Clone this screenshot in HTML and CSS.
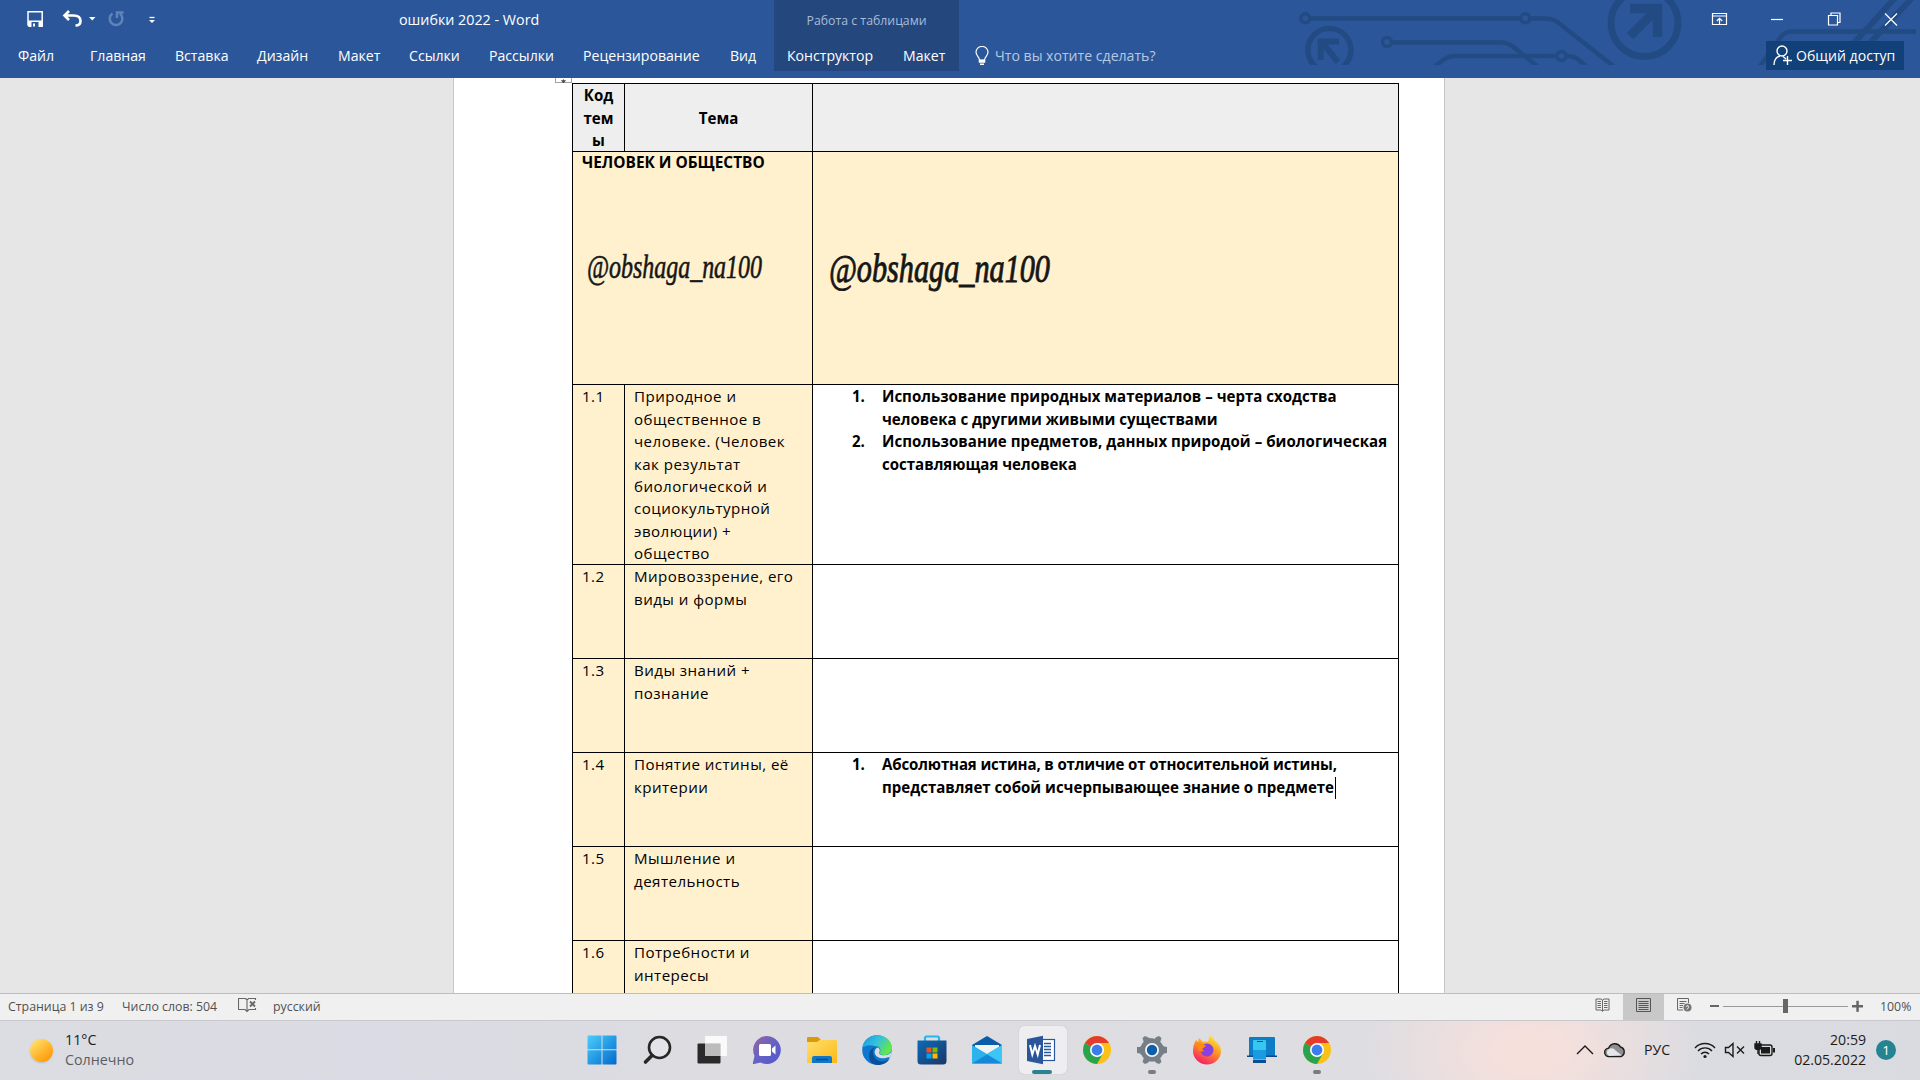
FILE: index.html
```html
<!DOCTYPE html>
<html lang="ru">
<head>
<meta charset="utf-8">
<title>ошибки 2022 - Word</title>
<link rel="stylesheet" href="styles.css">
</head>
<body>
<div class="screen">

<header class="ribbon">
  <svg class="ribbon-art" width="640" height="78" viewBox="0 0 640 78">
    <defs><clipPath id="art"><rect width="640" height="65"/></clipPath></defs>
    <g clip-path="url(#art)" fill="none" stroke="#234b83" stroke-width="4.5">
      <circle cx="25.3" cy="18.3" r="4.5" stroke-width="3.5"/>
      <path d="M30 18.500H240M250 18.500h15q9 0 15 5.500L337 69"/>
      <circle cx="245.3" cy="18.3" r="4.5" stroke-width="3.5"/>
      <circle cx="107" cy="42" r="4.5" stroke-width="3.5"/>
      <path d="M112 42.500H221q7 0 13 5L261 69"/>
      <path d="M151 69l13-9.500q5-3.500 11-3.500H277M286 56q8 0 13 4l9 8"/>
      <circle cx="281.5" cy="56" r="4.5" stroke-width="3.5"/>
      <circle cx="364.5" cy="23" r="33.5" stroke-width="7"/>
      <path d="M350 8.500h27.500V37M376 10L350 36" stroke-width="9.5"/>
      <circle cx="49.4" cy="50" r="21.5" stroke-width="5.5"/>
      <path d="M59 41.500H40.700V60M43 43.500L58 62" stroke-width="6"/>
      <path d="M636 31.500H512q-7 0-11 5L478 69"/>
      <path d="M615-2L574 43M632-2L590 43" stroke-width="6"/>
    </g>
  </svg>

  <div class="title-row">
    <div class="qat">
      <svg width="160" height="22" viewBox="0 0 160 22" fill="none" stroke="#fff">
        <path d="M8 3.700h14.200v14.500H9.500L8 16.800z" stroke-width="1.5"/>
        <path d="M8 12.500h14v6H8z" fill="#fff" stroke="none"/>
        <path d="M11.500 14h7v5h-7z" fill="#2b579a" stroke="none"/><path d="M13 15.500h2v3h-2z" fill="#fff" stroke="none"/>
        <path d="M49 3l-4.500 4.500L49 12M45.500 7.500h8c5.500 0 7 3 7 5.500 0 3.500-2.500 4.500-5 4.500" stroke-width="2.6"/>
        <path d="M69 9h6.500l-3.250 3.500z" fill="#fff" stroke="none"/>
        <g stroke="#6084ba" stroke-width="2.5"><path d="M92.500 5.500a6.300 6.300 0 1 0 7.500.3M97 10V4.500h6.500"/></g>
        <path d="M129.500 9.500h5" stroke-width="1.3"/><path d="M129 12h6l-3 3z" fill="#fff" stroke="none"/>
      </svg>
    </div>
    <div class="doc-title">ошибки 2022 - Word</div>
    <div class="context-title">Работа с таблицами</div>
    <div class="window-buttons">
      <svg width="190" height="20" viewBox="0 0 190 20" fill="none" stroke="#fff" stroke-width="1.2">
        <path d="M2.500 3.500h14v11h-14zM2.500 6h14M9.500 14V8.500M6.800 11l2.700-2.700L12.200 11"/>
        <path d="M61 9.500h12"/>
        <path d="M118.500 5.500h9v9.500h-9zM121 5V3h9v9.500h-2"/>
        <path d="M175 3.500L187 15.500M187 3.500L175 15.500"/>
      </svg>
    </div>
  </div>

  <nav class="tabs">
    <span>Файл</span><span>Главная</span><span>Вставка</span><span>Дизайн</span><span>Макет</span><span>Ссылки</span><span>Рассылки</span><span>Рецензирование</span><span>Вид</span><span class="ctx ctx-first">Конструктор</span><span class="ctx">Макет</span>
    <span class="tell-me">
      <svg width="14" height="20" viewBox="0 0 14 20" fill="none" stroke="#fff" stroke-width="1.2"><path d="M4.500 14c0-3-3.500-4-3.500-8a6 5.500 0 0 1 12 0c0 4-3.500 5-3.500 8z"/><path d="M4.500 14.500h5v1.500h-5zM5 18.300h4" stroke-width="1.5"/></svg>
      <span class="hint">Что вы хотите сделать?</span>
    </span>
    <span class="share">
      <svg width="20" height="21" viewBox="0 0 20 21" fill="none" stroke="#fff" stroke-width="1.4"><circle cx="9" cy="6" r="5"/><path d="M1 20c0-5 2-8 6-9M10 11.500l3 2.500M14.500 11v9M10 15.500h9"/></svg>
      <span>Общий доступ</span>
    </span>
  </nav>
</header>

<main class="workspace">
  <div class="page">
    <div class="table-handle"><svg width="9" height="5" viewBox="0 0 9 5"><path d="M4.500 0v2M2.500 1.500h4l-2 2.500z" stroke="#444" fill="#444" stroke-width=".6"/></svg></div>
    <div class="grid">
      <div class="cell head">Код<br>тем<br>ы</div>
      <div class="cell head">Тема</div>
      <div class="cell head"></div>

      <div class="cell section span2">
        <div class="section-name">ЧЕЛОВЕК И ОБЩЕСТВО</div>
        <svg class="sign sign-a" width="200" height="60"><text x="5" y="32" textLength="175" lengthAdjust="spacingAndGlyphs">@obshaga_na100</text></svg>
      </div>
      <div class="cell section">
        <svg class="sign sign-b" width="260" height="60"><text x="5" y="36" textLength="221" lengthAdjust="spacingAndGlyphs">@obshaga_na100</text></svg>
      </div>

      <div class="cell topic">1.1</div>
      <div class="cell topic">Природное и<br>общественное в<br>человеке. (Человек<br>как результат<br>биологической и<br>социокультурной<br>эволюции) +<br>общество</div>
      <div class="cell notes">
        <div class="item"><span>1.</span><span>Использование природных материалов – черта сходства<br>человека с другими живыми существами</span></div>
        <div class="item"><span>2.</span><span><span class="loose">Использование предметов, данных природой – биологическая</span><br>составляющая человека</span></div>
      </div>

      <div class="cell topic">1.2</div>
      <div class="cell topic">Мировоззрение, его<br>виды и формы</div>
      <div class="cell notes"></div>

      <div class="cell topic">1.3</div>
      <div class="cell topic">Виды знаний +<br>познание</div>
      <div class="cell notes"></div>

      <div class="cell topic">1.4</div>
      <div class="cell topic">Понятие истины, её<br>критерии</div>
      <div class="cell notes">
        <div class="item"><span>1.</span><span><span class="tight">Абсолютная истина, в отличие от относительной истины,</span><br>представляет собой исчерпывающее знание о предмете<i class="caret"></i></span></div>
      </div>

      <div class="cell topic">1.5</div>
      <div class="cell topic">Мышление и<br>деятельность</div>
      <div class="cell notes"></div>

      <div class="cell topic">1.6</div>
      <div class="cell topic">Потребности и<br>интересы</div>
      <div class="cell notes"></div>
    </div>
  </div>
</main>

<footer class="status">
  <span>Страница 1 из 9</span>
  <span class="st-words">Число слов: 504</span>
  <svg class="st-proof" width="19" height="16" viewBox="0 0 19 16" fill="none" stroke="#666" stroke-width="1.1"><path d="M9 3L7.500 1.500H.500v11H7L9 14.500l2-2h6.500V11M9 3v11M9 3l1.500-1.500h7V3"/><path d="M12 4.500l5 5M17 4.500l-5 5" stroke-width="1.8"/></svg>
  <span>русский</span>
  <span class="st-view"><svg width="15" height="14" viewBox="0 0 15 14" fill="none" stroke="#666"><path d="M7.500 2v11.500M7.500 2L6 1H1v11h5l1.500 1L9 12h5V1H9z"/><path d="M2.500 3.500h3.500M2.500 5.500h3.500M2.500 7.500h3.500M2.500 9.500h3.500M9 3.500h3.500M9 5.500h3.500M9 7.500h3.500M9 9.500h3.500"/></svg></span>
  <span class="st-view on"><svg width="15" height="14" viewBox="0 0 15 14" fill="none" stroke="#555"><path d="M.5.5h14v13H.5zM2.500 3.500h10M2.500 5.500h10M2.500 7.500h10M2.500 9.500h10M2.500 11.500h10"/></svg></span>
  <span class="st-view last"><svg width="15" height="14" viewBox="0 0 15 14" fill="none" stroke="#666"><path d="M6 12H.5V.5h11V5M2.500 3.500h7M2.500 5.500h5M2.500 7.500h3.500M2.500 9.500h3"/><circle cx="10.5" cy="9.5" r="4" fill="#777" stroke="none"/><path d="M9 8.500l2-1 .5 2-1.500 2" stroke="#f0f0f0"/></svg></span>
  <svg class="st-zoom" width="156" height="16" viewBox="0 0 156 16"><path d="M0 7h9v2H0z" fill="#666"/><path d="M13 8h125v1H13z" fill="#999"/><path d="M73 1h5v14h-5z" fill="#666"/><path d="M142 7h11v2.500h-11z" fill="#666"/><path d="M146.300 2.800h2.500v11h-2.500z" fill="#666"/></svg>
  <span class="st-pct">100%</span>
</footer>

<div class="taskbar">
  <div class="weather">
    <div class="sun"></div>
    <div class="weather-text"><div>11°C</div><div class="dim">Солнечно</div></div>
  </div>

  <div class="apps">
    <div class="app"><svg width="30" height="30" viewBox="0 0 30 30"><defs><linearGradient id="win" gradientUnits="userSpaceOnUse" x1="0" y1="0" x2="30" y2="30"><stop offset="0" stop-color="#4cd0fd"/><stop offset="1" stop-color="#0067cb"/></linearGradient></defs><path fill="url(#win)" d="M1.500.5H14.500V14.200H.5V1.500q0-1 1-1zM15.500.5h13q1 0 1 1V14.200h-14zM.5 15.300H14.500V29.500H1.500q-1 0-1-1zM15.500 15.300h14V28.500q0 1-1 1h-13z"/></svg></div>
    <div class="app"><svg width="30" height="30" viewBox="0 0 30 30" fill="none" stroke="#272727"><circle cx="17.5" cy="12.5" r="10.5" stroke-width="2.6" fill="#e4e4e8"/><path d="M10 20.500L3.500 27" stroke-width="3.6" stroke-linecap="round"/></svg></div>
    <div class="app"><svg width="30" height="30" viewBox="0 0 30 30"><rect x=".5" y="8.5" width="23" height="20" rx="1" fill="#2a2a2a"/><rect x="8" y="1" width="22" height="20" rx="1" fill="#fff" fill-opacity=".85"/><path d="M8 8.500h15.500V21H8z" fill="#bcbcbc"/></svg></div>
    <div class="app"><svg width="30" height="30" viewBox="0 0 30 30"><defs><linearGradient id="chat" x1="0" y1="0" x2="1" y2="1"><stop offset="0" stop-color="#9a64a0"/><stop offset=".5" stop-color="#6562c4"/><stop offset="1" stop-color="#5058d0"/></linearGradient></defs><path d="M15 1a14 14 0 1 1-6.500 26.500L2 29q-1.500 0-1-1.500L2.500 21A14 14 0 0 1 15 1z" fill="url(#chat)"/><rect x="7" y="9" width="12" height="12" rx="1.5" fill="#fff"/><path d="M20 13.500l3.500-3v9l-3.500-3z" fill="#fff"/></svg></div>
    <div class="app"><svg width="30" height="30" viewBox="0 0 30 30"><defs><linearGradient id="fold" x1="0" y1="0" x2="1" y2="1"><stop offset="0" stop-color="#ffdf70"/><stop offset="1" stop-color="#fcb912"/></linearGradient></defs><path d="M0 3q0-1 1-1h10l3 3h-1v4H0z" fill="#dc9a08"/><path d="M0 7h10l3-2h16q1 0 1 1v22H0z" fill="url(#fold)"/><path d="M5 28v-5q0-2 2-2h16q2 0 2 2v5z" fill="#1177c8"/><path d="M9 24.500h12" stroke="#0b4a87" stroke-width="1.5"/></svg></div>
    <div class="app"><svg width="30" height="30" viewBox="0 0 30 30"><defs><linearGradient id="edgetop" x1="0" y1="0" x2="1" y2=".5"><stop offset="0" stop-color="#1595dc"/><stop offset=".5" stop-color="#34bfe0"/><stop offset="1" stop-color="#62e84a"/></linearGradient></defs><circle cx="15" cy="15" r="14.800" fill="#0c79cf"/><path d="M.3 13C1.500 5 7.500.2 15 .2c9 0 15 6 15 12.500 0 5-4 7.300-8 7.300-3 0-5-1-4-3 1.500-3-1-6-5-6C7 9 2 11 .3 13z" fill="url(#edgetop)"/><path d="M11 17c0 5 4 9.500 9 9.500 3.500 0 6-1.500 8-3.500-2 4.500-7 7-12 7-6 0-9-4-9-9 0-5 3-8 6-9-1.500 1.500-2 3-2 5z" fill="#0b4f9b"/><path d="M16 12.500c-2 .5-4 3-3 6.500 1.500 4 7 5.500 14 3l1 1L30 16c-1.500 3-5 4.500-8.500 4.300-3-.2-5-1.300-4-3.300.7-1.500.3-3.500-1.500-4.500z" fill="#dcdce1"/></svg></div>
    <div class="app"><svg width="30" height="30" viewBox="0 0 30 30"><defs><linearGradient id="store" x1="0" y1="0" x2="1" y2="1"><stop offset="0" stop-color="#0c6bb8"/><stop offset="1" stop-color="#1a3767"/></linearGradient></defs><path d="M8 8V3q0-1.500 1.500-1.500h11q1.500 0 1.500 1.500v5" fill="none" stroke="#29b5ee" stroke-width="2.2"/><path d="M.5 5.500h29V26q0 3.500-3.500 3.500H4q-3.500 0-3.500-3.500z" fill="url(#store)"/><path d="M9.500 12.500h5v5h-5z" fill="#f25022"/><path d="M15.500 12.500h5v5h-5z" fill="#7fba00"/><path d="M9.500 18.500h5v5h-5z" fill="#00a4ef"/><path d="M15.500 18.500h5v5h-5z" fill="#ffb900"/></svg></div>
    <div class="app"><svg width="30" height="30" viewBox="0 0 30 30"><path d="M15 1L30 10v8H0v-8z" fill="#0a5ba8"/><path d="M3 10h24v8l-12 6-12-6z" fill="#f2f2f2"/><path d="M0 10l15 9 15-9v18.500H0z" fill="#2cb2ec"/><path d="M0 28.500L15 19.500 30 28.500z" fill="#1588d8"/><path d="M30 10L15 19 30 28z" fill="#3cc6f6"/></svg></div>
    <div class="app active"><svg width="30" height="30" viewBox="0 0 30 30"><rect x="13" y="4.5" width="14.5" height="21" fill="#fff" stroke="#2b579a" stroke-width="1.2"/><path d="M17 8.500h7M17 11.500h7M17 14.500h7M17 17.500h7M17 20.500h7" stroke="#2b579a" stroke-width="1.5"/><path d="M0 4L16 .8v28.400L0 26z" fill="#2b579a"/><path d="M3 10l2.300 9.500L8 11l2.700 8.500L13 10" fill="none" stroke="#fff" stroke-width="2"/></svg><i class="bar"></i></div>
    <div class="app"><svg width="30" height="30" viewBox="0 0 30 30"><use href="#chrome"/></svg></div>
    <div class="app"><svg width="30" height="30" viewBox="0 0 30 30"><g fill="#767f87"><circle cx="15" cy="15" r="11.500"/><path d="M12 3l-.7-.5L8 1 5.500 3l1.500 5-4 4L0 12v6l3 .5 4 4L5.500 27 8 29l3.500-1.500L12 26h6l.5 1.500L22 29l2.500-2-1.500-4.500 4-4 3-.5v-6l-3-.5-4-4L24.500 3 22 1l-3.500 1.500L18 4z"/></g><circle cx="15" cy="15" r="7" fill="#f4f4f4"/><circle cx="15" cy="15" r="5.200" fill="#0c5ea8"/></svg><i class="dot"></i></div>
    <div class="app"><svg width="30" height="30" viewBox="0 0 30 30"><defs><linearGradient id="fox" x1=".8" y1="0" x2=".3" y2="1"><stop offset="0" stop-color="#fff04a"/><stop offset=".45" stop-color="#ff9a1f"/><stop offset="1" stop-color="#f5186b"/></linearGradient></defs><path d="M18 0c3 2 4 4 5 6 4 3 6 6 6 10a14 13.500 0 0 1-28 0C1 12 2 9 3 7l1-2 2 2 1-4 4 4q4-1 5 0z" fill="url(#fox)"/><circle cx="15" cy="15" r="6.5" fill="#8a3fe0"/><path d="M4 8c4-1 7 0 10 3l-4 3 2 2c-4 2-7-2-8-8z" fill="#ff8a16"/></svg></div>
    <div class="app"><svg width="30" height="30" viewBox="0 0 30 30"><rect x="2" y="2" width="26" height="20" rx="1" fill="#0f7cc6"/><path d="M0 20.500h30V22H0z" fill="#0a4a8c"/><rect x="6" y="5" width="13" height="23" rx="1" fill="#35c6f2"/><path d="M6 15h13v9H6z" fill="#1a9be0"/><path d="M6 25h13v3H6z" fill="#0b4f93"/><path d="M10 6.500h6" stroke="#0b4f93"/></svg></div>
    <div class="app"><svg width="30" height="30" viewBox="0 0 30 30"><g id="chrome"><circle cx="15" cy="15" r="14" fill="#fbc116"/><path d="M15 15L2.900 8A14 14 0 0 0 15 29l6-10.500z" fill="#2ba24c"/><path d="M15 15L2.900 8A14 14 0 0 1 27.100 8H15z" fill="#e33b2e"/><circle cx="15" cy="15" r="7" fill="#fff"/><circle cx="15" cy="15" r="5.400" fill="#3b7ded"/></g></svg><i class="dot"></i></div>
  </div>

  <div class="tray">
    <svg width="200" height="24" viewBox="0 0 200 24" fill="none" stroke="#1b1b1b" stroke-width="1.4">
      <path d="M2 16l8-8 8 8"/>
      <path d="M34 18.500a4.200 4.200 0 0 1-.3-8.400A6.500 6.500 0 0 1 45.500 9a5 5 0 0 1 .5 9.500z" fill="#8f8f8f"/><path d="M34 18a4 4 0 0 1 1-7.500c3-.5 4 .5 5.500 2l6.500 5z" fill="#e6e6ea" stroke="none"/>
      <path d="M120 10a13.500 13.500 0 0 1 20 0M123 13a9.500 9.500 0 0 1 14 0M126 16a5.500 5.500 0 0 1 8 0"/><circle cx="130" cy="18.5" r="1.600" fill="#1b1b1b" stroke="none"/>
      <path d="M150.500 9.500h3l4.500-4v13l-4.500-4h-3zM162 8.500l7 7M169 8.500l-7 7"/>
      <rect x="184" y="7" width="13" height="10.5" rx="2"/><path d="M186 9h9v6.500h-9zM198 10h2v4.500h-2z" fill="#1b1b1b" stroke="none"/><path d="M180 6h6v3.500q0 2-3 2t-3-2zM181.500 3v3M184.500 3v3M183 11v5" fill="#1b1b1b"/>
    </svg>
    <span class="layout">РУС</span>
    <div class="clock"><div>20:59</div><div>02.05.2022</div></div>
    <div class="badge">1</div>
  </div>
</div>

</div>
</body>
</html>
```
FILE: styles.css
```css
* { box-sizing: border-box; }
body { margin: 0; font-family: "Open Sans", "Noto Sans", sans-serif; overflow: hidden; }
.screen { width: 1920px; height: 1080px; display: grid; grid-template-rows: 78px 916px 26px 60px; overflow: hidden; }
svg { display: block; flex: none; }

/* ribbon */
.ribbon { position: relative; background: #2b579a; color: #fff; overflow: hidden; }
.ribbon-art { position: absolute; left: 1280px; top: 0; }
.title-row { position: relative; height: 41px; display: grid; grid-template-columns: 399px 375px 185px 751px 210px; }
.qat { padding: 8px 0 0 20px; }
.doc-title { font-size: 14.3px; line-height: 40px; }
.context-title { background: #24477e; color: #a9bcd9; font-size: 12.3px; line-height: 42px; text-align: center; }
.window-buttons { grid-column: 5; padding-top: 10px; }
.tabs { position: relative; height: 30px; margin-left: 18px; display: grid; grid-template-columns: 72px 85px 82px 81px 71px 80px 94px 147px 44px 129px 56px 807px 138px; font-size: 14.1px; line-height: 29px; white-space: nowrap; }
.ctx { background: #24477e; }
.ctx-first { padding-left: 13px; }
.tell-me { display: flex; gap: 6px; padding: 5px 0 0 16px; line-height: 20px; color: #b8c8e1; }
.tell-me .hint { line-height: 19px; }
.share { display: flex; align-items: center; gap: 3px; background: #124078; padding-left: 7px; height: 29px; line-height: 29px; }

/* document */
.workspace { background: #e6e6e6; overflow: hidden; border-bottom: 1px solid #bdbdbd; padding-left: 453px; }
.page { position: relative; width: 992px; height: 930px; background: #fff; border: solid #c6c6c6; border-width: 0 1px; padding: 5px 0 0 118px; }
.table-handle { position: absolute; left: 101px; top: -10px; width: 17px; height: 15px; border: 1px solid #a0a0a0; background: #fff; padding: 10px 0 0 3px; }
.grid { display: grid; grid-template-columns: 51px 187px 585px; grid-template-rows: 67px 232px 179px repeat(5, 93px); gap: 1px; padding: 1px; width: 827px; background: #000; color: #000; font-size: 15.1px; line-height: 22.4px; white-space: nowrap; }
.cell { padding: .4px 0 0 9px; min-width: 0; background: #fff; }
.head { background: #eee; font-weight: 700; text-align: center; display: flex; align-items: center; justify-content: center; padding: 1px 0 0; }
.span2 { grid-column: span 2; }
.section, .topic { background: #fff0ce; }
.section-name { font-weight: 700; font-size: 15.4px; height: 23px; }
.topic { letter-spacing: .46px; }
.notes { font-weight: 700; font-size: 15.06px; padding-left: 39px; }
.item { display: grid; grid-template-columns: 30px auto; }
.tight { letter-spacing: -.135px; }
.loose { letter-spacing: .05px; }
.caret { display: inline-block; width: 1px; height: 22px; background: #000; margin: 0 0 -6px 1px; vertical-align: baseline; }
.sign { overflow: visible; }
.sign text { font-family: "Liberation Serif", serif; font-style: italic; fill: #161616; stroke: #161616; stroke-width: .6px; }
.sign-a { margin-top: 71px; }
.sign-a text { font-size: 33px; }
.sign-b { margin: 94px 0 0 2px; }
.sign-b text { font-size: 40px; stroke-width: .9px; }

/* status bar */
.status { display: grid; grid-template-columns: 114px 116px 35px 1309px 41px 41px 44px 167px auto; padding-left: 8px; background: #f0f0f0; color: #505050; font-size: 12.35px; line-height: 26px; white-space: nowrap; }
.st-proof { margin-top: 3px; }
.st-view { display: flex; justify-content: center; padding-top: 4px; }
.st-view.last { padding-right: 3px; }
.st-view.on { background: #c8c8c8; }
.st-zoom { margin: 4px 0 0 2px; }
.st-pct { padding-left: 5px; }

/* taskbar */
.taskbar { display: grid; grid-template-columns: 574.5px 1000.5px 345px; border-top: 1px solid #c9c9cd; background: radial-gradient(ellipse 170px 110px at 1530px 30px, #f6e0dc 15%, rgba(246, 224, 220, 0) 100%), linear-gradient(90deg, #dcdde2, #dadbe4 20%, #dcdce1 35%, #dddde2 75%, #d9dbe1); color: #1b1b1b; font-size: 14.1px; }
.weather { display: flex; padding: 9px 0 0 30px; gap: 12px; line-height: 20px; }
.weather-text { font-size: 14.3px; }
.sun { width: 23px; height: 23px; margin-top: 9px; border-radius: 50%; background: linear-gradient(140deg, #ffe169 10%, #ff9a08 85%); box-shadow: 0 1px 2px #9996; }
.dim { color: #5c5c60; }
.apps { display: flex; }
.app { position: relative; width: 55px; height: 59px; display: flex; justify-content: center; padding-top: 14px; }
.app.active::before { content: ""; position: absolute; left: 4px; top: 5px; width: 48px; height: 48px; border-radius: 5px; background: #eeeef1; box-shadow: 0 0 1px #aaa; }
.app svg { position: relative; }
.bar, .dot { position: absolute; top: 49px; height: 4px; border-radius: 2px; }
.bar { width: 20px; background: #2a8394; }
.dot { width: 8px; background: #7c7c80; }
.tray { position: relative; display: grid; grid-template-columns: 201px 90px auto; padding-top: 17px; }
.layout { position: absolute; left: 69px; top: 19px; line-height: 20px; }
.clock { margin-top: -8px; text-align: right; line-height: 20px; }
.badge { width: 20px; height: 20px; margin: 2px 0 0 10px; border-radius: 50%; background: #268391; color: #fff; text-align: center; font-size: 13.5px; line-height: 20px; }
```
